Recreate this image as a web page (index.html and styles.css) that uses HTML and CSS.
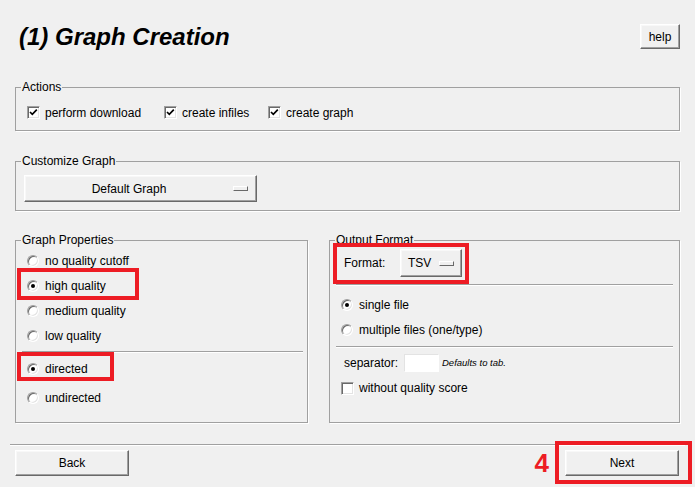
FILE: index.html
```html
<!DOCTYPE html>
<html>
<head>
<meta charset="utf-8">
<link rel="stylesheet" href="styles.css">
</head>
<body>
<div class="page">
  <header class="top">
    <h1 class="title">(1) Graph Creation</h1>
    <button class="btn help">help</button>
  </header>

  <fieldset class="group actions">
    <legend>Actions</legend>
    <div class="check-row">
      <label class="check item-1"><span class="box"><svg viewBox="0 0 11 11" width="11" height="11"><path d="M2 5 L4.3 7.3 L8.8 2.6" fill="none" stroke="#000" stroke-width="1.7"/></svg></span>perform download</label>
      <label class="check item-2"><span class="box"><svg viewBox="0 0 11 11" width="11" height="11"><path d="M2 5 L4.3 7.3 L8.8 2.6" fill="none" stroke="#000" stroke-width="1.7"/></svg></span>create infiles</label>
      <label class="check"><span class="box"><svg viewBox="0 0 11 11" width="11" height="11"><path d="M2 5 L4.3 7.3 L8.8 2.6" fill="none" stroke="#000" stroke-width="1.7"/></svg></span>create graph</label>
    </div>
  </fieldset>

  <fieldset class="group custom">
    <legend>Customize Graph</legend>
    <div class="custom-body">
      <button class="btn menu menu-wide"><span class="menu-text">Default Graph</span><span class="ind"></span></button>
    </div>
  </fieldset>

  <div class="cols">
    <fieldset class="group props">
      <legend>Graph Properties</legend>
      <div class="props-body">
        <div class="radio q"><span class="circle"></span>no quality cutoff</div>
        <div class="radio q"><span class="circle on"></span>high quality</div>
        <div class="radio q"><span class="circle"></span>medium quality</div>
        <div class="radio q"><span class="circle"></span>low quality</div>
        <div class="sep sep-props"></div>
        <div class="radio dir"><span class="circle on"></span>directed</div>
        <div class="radio undir"><span class="circle"></span>undirected</div>
      </div>
    </fieldset>

    <fieldset class="group output">
      <legend>Output Format</legend>
      <div class="out-body">
        <div class="format-row">
          <span class="format-label">Format:</span>
          <button class="btn menu menu-tsv"><span>TSV</span><span class="ind"></span></button>
        </div>
        <div class="sep sep-out1"></div>
        <div class="radio single"><span class="circle on"></span>single file</div>
        <div class="radio"><span class="circle"></span>multiple files (one/type)</div>
        <div class="sep sep-out2"></div>
        <div class="sep-row">
          <span class="sep-label">separator:</span>
          <span class="entry"></span>
          <span class="hint">Defaults to tab.</span>
        </div>
        <label class="check noq"><span class="box"></span>without quality score</label>
      </div>
    </fieldset>
  </div>

  <div class="sep bottom-sep"></div>

  <footer class="foot">
    <button class="btn nav">Back</button>
    <span class="step">4</span>
    <button class="btn nav">Next</button>
  </footer>

  <div class="mark mark-hq"></div>
  <div class="mark mark-dir"></div>
  <div class="mark mark-fmt"></div>
  <div class="mark mark-next"></div>
</div>
</body>
</html>
```

FILE: styles.css
```css
* { box-sizing: border-box; }

html, body {
  margin: 0;
  padding: 0;
  background: #f0f0f0;
}

body {
  font-family: "Liberation Sans", Arial, sans-serif;
  font-size: 12px;
  color: #000;
}

.page {
  position: relative;
  width: 695px;
  height: 487px;
  overflow: hidden;
}

.top {
  display: flex;
  justify-content: space-between;
  align-items: flex-start;
  padding: 23px 15px 0 19px;
}

.title {
  margin: 0;
  font-size: 24px;
  line-height: 28px;
  font-weight: bold;
  font-style: italic;
}

.btn {
  font-family: "Liberation Sans", Arial, sans-serif;
  font-size: 12px;
  color: #000;
  background: #f0f0f0;
  border: 1px solid;
  border-color: #fff #696969 #696969 #fff;
  box-shadow: inset -1px -1px 0 #a0a0a0, inset 1px 1px 0 #f8f8f8;
  padding: 0;
  margin: 0;
  border-radius: 0;
}

.help {
  width: 40px;
  height: 25px;
  margin-top: 1px;
}

.group {
  margin: 0;
  padding: 0 0 0 5px;
  border: 1px solid #a0a0a0;
  min-width: 0;
  box-shadow: 1px 1px 0 #fff;
}

.group legend {
  padding: 0 1px;
  line-height: 14px;
  font-size: 12px;
}

.actions {
  width: 665px;
  margin: 29px 0 0 15px;
}

.check-row {
  display: flex;
  align-items: center;
  height: 36px;
  padding: 1px 0 0 6px;
}

.check {
  display: flex;
  align-items: center;
  gap: 5px;
  height: 14px;
}

.item-1 { width: 137px; }
.item-2 { width: 104px; }

.box {
  width: 13px;
  height: 13px;
  flex: none;
  background: #fff;
  border: 1px solid;
  border-color: #a0a0a0 #fff #fff #a0a0a0;
  box-shadow: inset 1px 1px 0 #696969, inset -1px -1px 0 #e3e3e3;
  display: flex;
  align-items: center;
  justify-content: center;
}

.box svg { display: block; }

.custom {
  width: 665px;
  margin: 23px 0 0 15px;
}

.custom-body {
  padding: 7px 0 8px 3px;
}

.menu {
  display: flex;
  align-items: center;
}

.menu-wide {
  width: 233px;
  height: 27px;
  padding: 0 8px 0 0;
}

.menu-text {
  flex: 1;
  text-align: center;
}

.ind {
  width: 15px;
  height: 5px;
  flex: none;
  background: #f0f0f0;
  border: 1px solid;
  border-color: #fff #696969 #696969 #fff;
}

.cols {
  display: flex;
  gap: 21px;
  margin: 22px 0 0 15px;
}

.props { width: 293px; }
.output { width: 351px; }

.props-body {
  height: 173px;
  padding: 1px 4px 0 0;
}

.out-body {
  height: 173px;
  padding: 0 6px 0 0;
}

.radio {
  display: flex;
  align-items: center;
  gap: 6px;
  height: 25px;
  padding-left: 6px;
}

.circle {
  width: 12px;
  height: 12px;
  flex: none;
  border-radius: 50%;
  background: #fff;
  border: 1px solid;
  border-color: #a0a0a0 #fff #fff #a0a0a0;
  box-shadow: inset 1px 1px 0 #696969, inset -1px -1px 0 #e3e3e3;
  display: flex;
  align-items: center;
  justify-content: center;
}

.circle.on::after {
  content: "";
  width: 4px;
  height: 4px;
  border-radius: 50%;
  background: #000;
}

.sep {
  height: 2px;
  border-top: 1px solid #a0a0a0;
  border-bottom: 1px solid #fff;
  margin-left: 1px;
}

.sep-props { margin-top: 3px; }
.dir { margin-top: 3px; }
.undir { margin-top: 4px; }

.format-row {
  display: flex;
  align-items: center;
  height: 28px;
  margin-top: 2px;
  padding-left: 9px;
}

.format-label { width: 56px; }

.menu-tsv {
  width: 62px;
  height: 28px;
  justify-content: space-between;
  padding: 0 7px 0 7px;
}

.sep-out1 { margin-top: 7px; }
.single { margin-top: 6px; }
.sep-out2 { margin-top: 4px; }

.sep-row {
  display: flex;
  align-items: center;
  height: 18px;
  margin-top: 6px;
  padding-left: 9px;
}

.sep-label { width: 60px; }

.entry {
  width: 35px;
  height: 18px;
  background: #fff;
  border: 1px solid;
  border-color: #e3e3e3 #fff #fff #e3e3e3;
}

.hint {
  margin-left: 3px;
  font-size: 9.5px;
  font-style: italic;
  position: relative;
  top: -1px;
}

.noq {
  margin-top: 9px;
  padding-left: 6px;
}

.bottom-sep {
  margin: 21px 10px 0 10px;
}

.foot {
  display: flex;
  align-items: center;
  margin-top: 4px;
  padding: 0 16px 0 15px;
}

.nav {
  width: 114px;
  height: 26px;
}

.step {
  margin-left: auto;
  margin-right: 16px;
  font-size: 26px;
  line-height: 26px;
  font-weight: bold;
  color: #ed1c24;
}

.mark {
  position: absolute;
  border: 4px solid #ed1c24;
}

.mark-hq { left: 17px; top: 268px; width: 122px; height: 32px; }
.mark-dir { left: 17px; top: 352px; width: 97px; height: 29px; }
.mark-fmt { left: 333px; top: 243px; width: 136px; height: 41px; }
.mark-next { left: 555px; top: 441px; width: 137px; height: 43px; }
```
